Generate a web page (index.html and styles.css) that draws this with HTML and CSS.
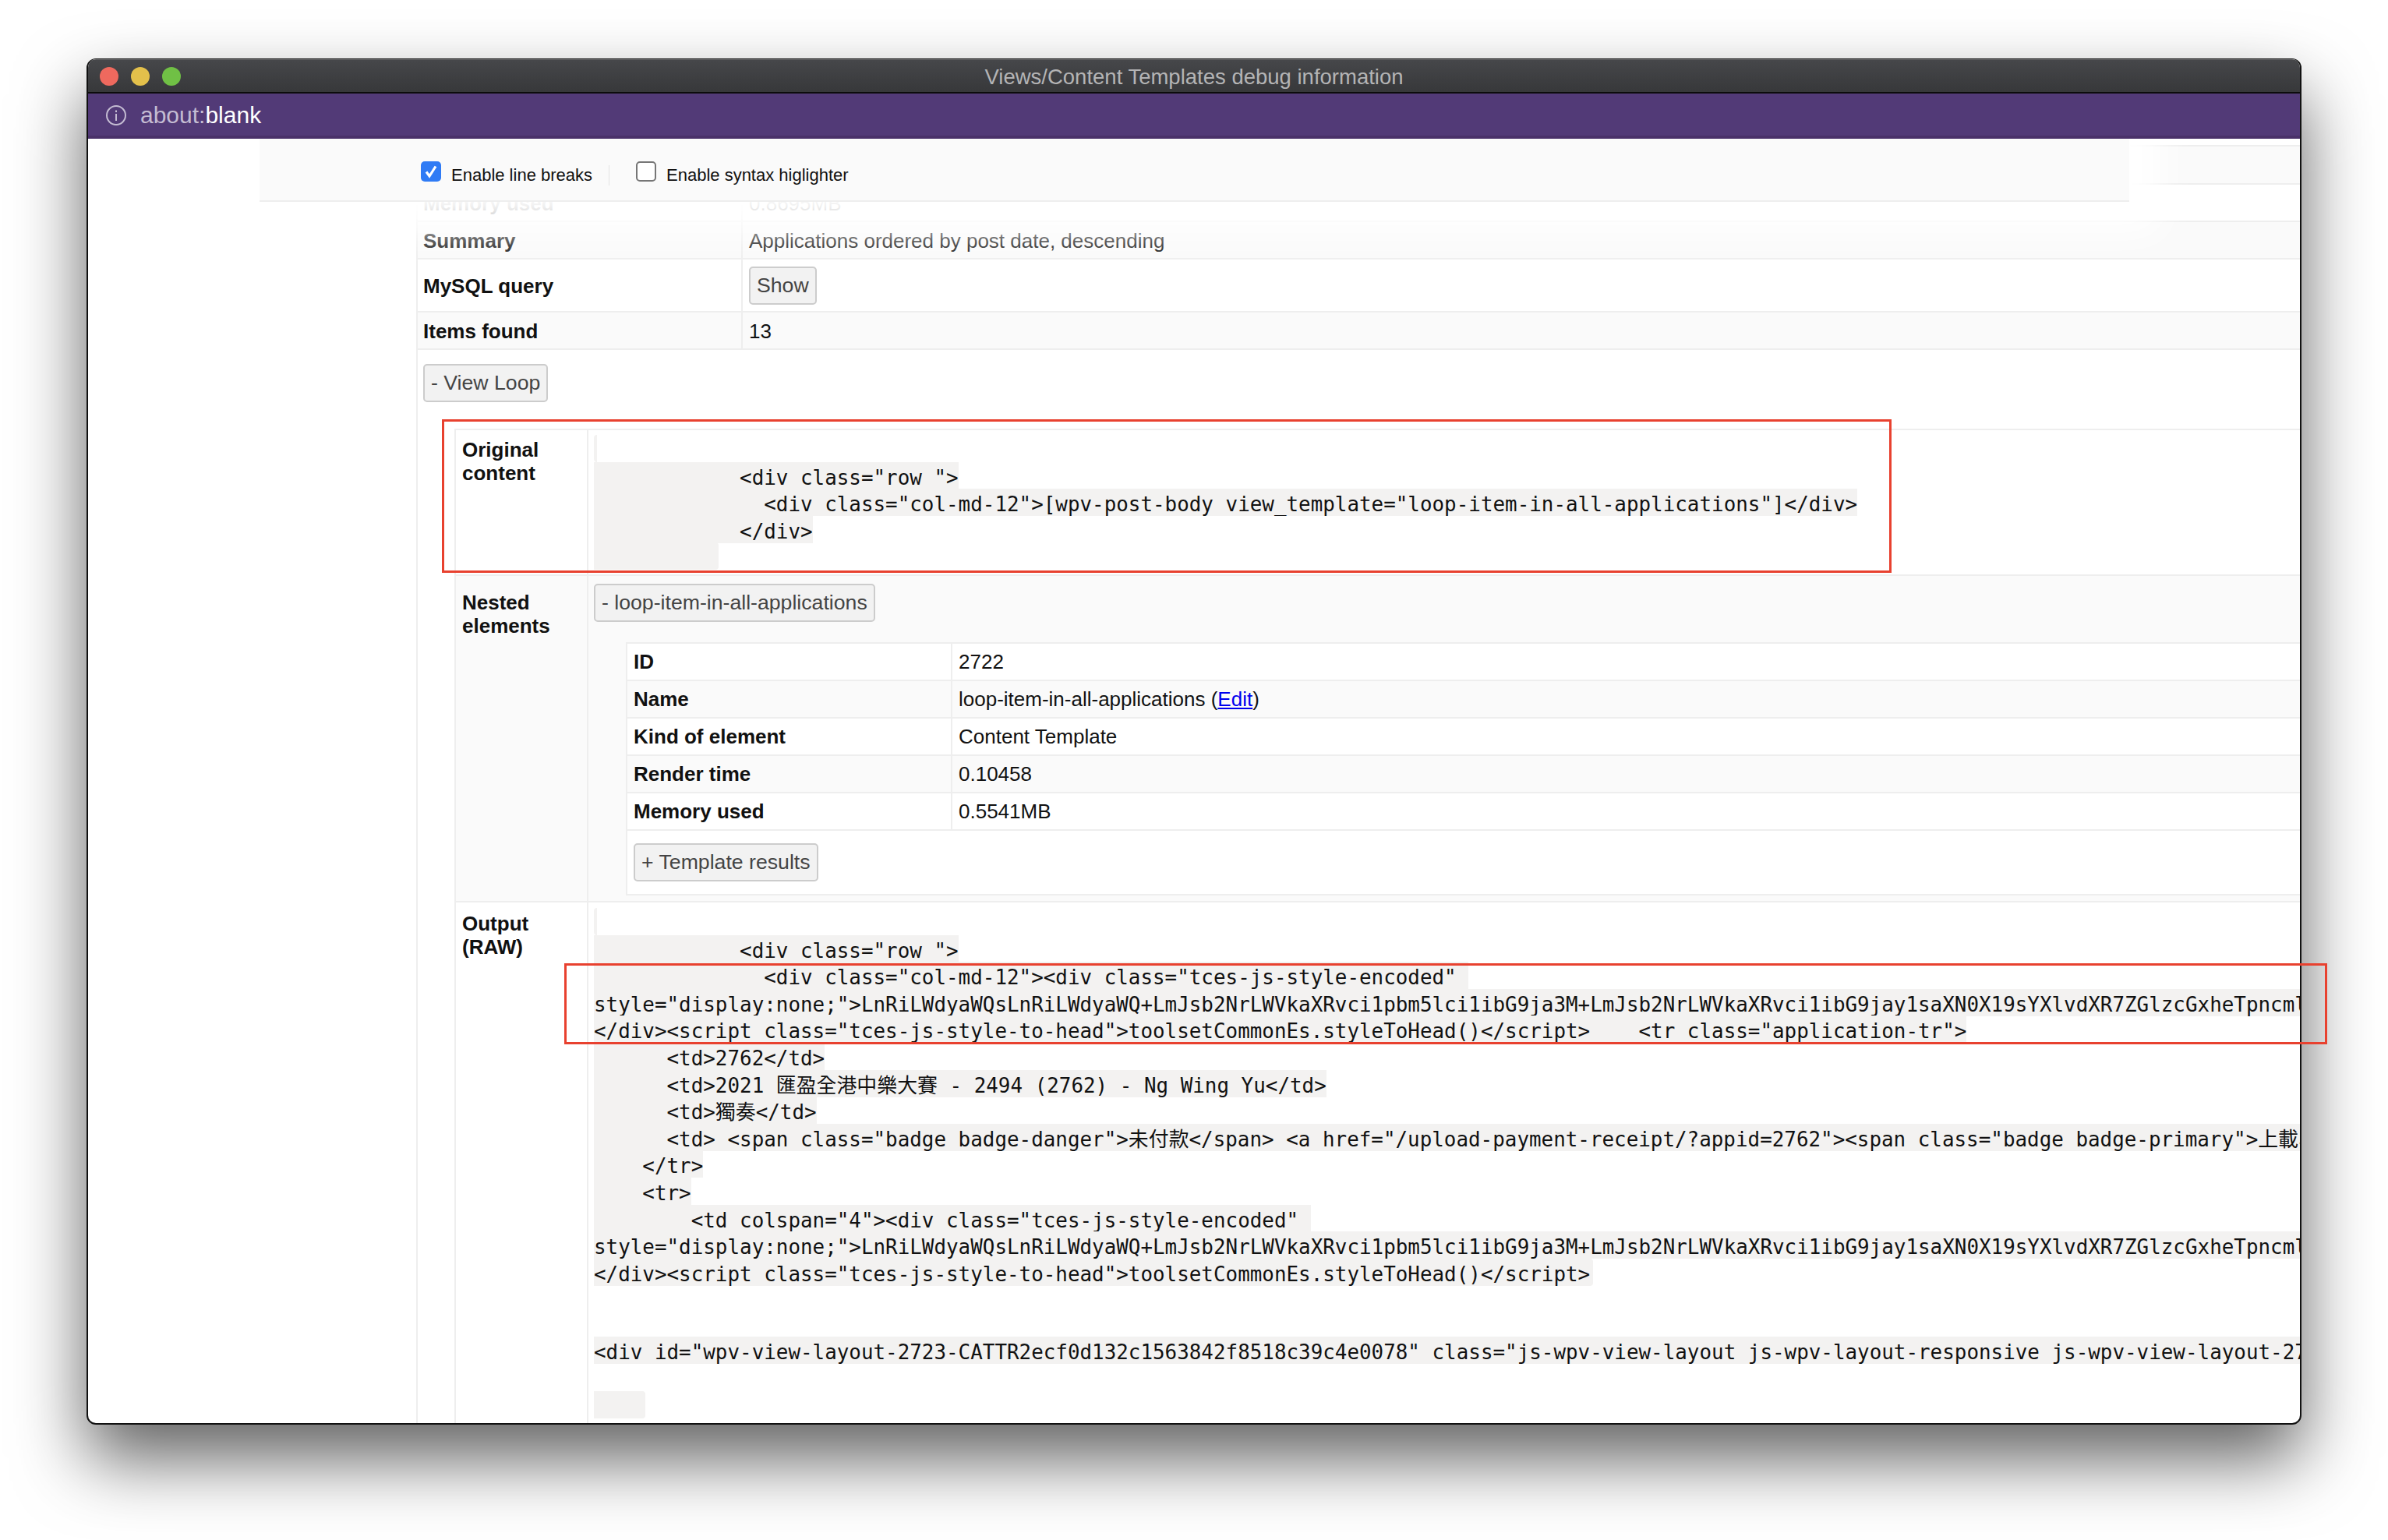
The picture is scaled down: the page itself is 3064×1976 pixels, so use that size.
FILE: index.html
```html
<!DOCTYPE html>
<html lang="en">
    <head>
        <meta charset="UTF-8" />
        <title>Views/Content Templates debug information</title>
        <link rel="stylesheet" href="styles.css">
    </head>
    <body>
        <!-- 창 -->
        <div class="window">
            <div class="titlebar">
                <div class="lights">
                    <span class="light red"></span>
                    <span class="light yellow"></span>
                    <span class="light green"></span>
                </div>
                <div class="title">Views/Content Templates debug information</div>
            </div>
            <div class="addressbar">
                <svg class="info" width="28" height="28" viewBox="0 0 28 28">
                    <circle cx="14" cy="14" r="12" fill="none" stroke="#c4bcd2" stroke-width="2" />
                    <rect x="13" y="12" width="2" height="9" fill="#c4bcd2" />
                    <rect x="13" y="7.5" width="2" height="2.5" fill="#c4bcd2" />
                </svg>
                <span class="url"><span class="scheme">about:</span>blank</span>
            </div>

            <div class="content">
                <!-- 상단 고정바 -->
                <div class="toolbar">
                    <label class="opt">
                        <span class="check on">
                            <svg width="26" height="26" viewBox="0 0 26 26">
                                <path d="M7 13.5 L11 19 L19 6.5" fill="none" stroke="#fff" stroke-width="3.2" />
                            </svg>
                        </span>
                        Enable line breaks
                    </label>
                    <span class="divider"></span>
                    <label class="opt">
                        <span class="check"></span>
                        Enable syntax higlighter
                    </label>
                </div>

                <div class="main">
                    <div class="row shade first"><div class="lbl"></div><div class="val"></div></div>
                    <div class="row"><div class="lbl">Memory used</div><div class="val">0.8695MB</div></div>
                    <div class="row shade"><div class="lbl">Summary</div><div class="val">Applications ordered by post date, descending</div></div>
                    <div class="row tall"><div class="lbl">MySQL query</div><div class="val"><button class="btn">Show</button></div></div>
                    <div class="row shade"><div class="lbl">Items found</div><div class="val">13</div></div>

                    <div class="loopbar"><button class="btn">- View Loop</button></div>

                    <!-- 내부 테이블 -->
                    <div class="nested">
                        <div class="nrow">
                            <div class="nlbl">Original content</div>
                            <div class="nval">
<pre class="code"><code>
            &lt;div class="row "&gt;
              &lt;div class="col-md-12"&gt;[wpv-post-body view_template="loop-item-in-all-applications"]&lt;/div&gt;
            &lt;/div&gt;
          </code></pre>
                            </div>
                        </div>
                        <div class="nrow shade">
                            <div class="nlbl">Nested elements</div>
                            <div class="nval">
                                <button class="btn">- loop-item-in-all-applications</button>
                                <div class="sub">
                                    <div class="row white"><div class="lbl">ID</div><div class="val">2722</div></div>
                                    <div class="row shade"><div class="lbl">Name</div><div class="val">loop-item-in-all-applications (<a href="#">Edit</a>)</div></div>
                                    <div class="row white"><div class="lbl">Kind of element</div><div class="val">Content Template</div></div>
                                    <div class="row shade"><div class="lbl">Render time</div><div class="val">0.10458</div></div>
                                    <div class="row white"><div class="lbl">Memory used</div><div class="val">0.5541MB</div></div>
                                    <div class="subfoot"><button class="btn">+ Template results</button></div>
                                </div>
                            </div>
                        </div>
                        <div class="nrow last">
                            <div class="nlbl">Output (RAW)</div>
                            <div class="nval">
<pre class="code"><code>
            &lt;div class="row "&gt;
              &lt;div class="col-md-12"&gt;&lt;div class="tces-js-style-encoded" 
style="display:none;"&gt;LnRiLWdyaWQsLnRiLWdyaWQ+LmJsb2NrLWVkaXRvci1pbm5lci1ibG9ja3M+LmJsb2NrLWVkaXRvci1ibG9jay1saXN0X19sYXlvdXR7ZGlzcGxheTpncmlkfQ==
&lt;/div&gt;&lt;script class="tces-js-style-to-head"&gt;toolsetCommonEs.styleToHead()&lt;/script&gt;    &lt;tr class="application-tr"&gt;
      &lt;td&gt;2762&lt;/td&gt;
      &lt;td&gt;2021 匯盈全港中樂大賽 - 2494 (2762) - Ng Wing Yu&lt;/td&gt;
      &lt;td&gt;獨奏&lt;/td&gt;
      &lt;td&gt; &lt;span class="badge badge-danger"&gt;未付款&lt;/span&gt; &lt;a href="/upload-payment-receipt/?appid=2762"&gt;&lt;span class="badge badge-primary"&gt;上載收據&lt;/span&gt;&lt;/a&gt;&lt;/td&gt;
    &lt;/tr&gt;
    &lt;tr&gt;
        &lt;td colspan="4"&gt;&lt;div class="tces-js-style-encoded" 
style="display:none;"&gt;LnRiLWdyaWQsLnRiLWdyaWQ+LmJsb2NrLWVkaXRvci1pbm5lci1ibG9ja3M+LmJsb2NrLWVkaXRvci1ibG9jay1saXN0X19sYXlvdXR7ZGlzcGxheTpncmlkfQ==
&lt;/div&gt;&lt;script class="tces-js-style-to-head"&gt;toolsetCommonEs.styleToHead()&lt;/script&gt;</code></pre>
<pre class="code tail"><code class="plain">

&lt;div id="wpv-view-layout-2723-CATTR2ecf0d132c1563842f8518c39c4e0078" class="js-wpv-view-layout js-wpv-layout-responsive js-wpv-view-layout-2723"&gt;

    </code></pre>
                            </div>
                        </div>
                    </div>
                </div>
            </div>
        </div>

        <!-- 빨간 표시 박스 -->
        <div class="mark mark1"></div>
        <div class="mark mark2"></div>
    </body>
</html>
```

FILE: styles.css
```css
/* 공통 */
:root {
    --line: #eee;
    --shade: #fafafa;
    --band: #f3f2f1;
}

html,
body {
    margin: 0;
    background-color: #fff;
}

body {
    position: relative;
    width: 3064px;
    height: 1976px;
    padding: 75px 0 0 111px;
    box-sizing: border-box;
    overflow: hidden;
    font-family: "Liberation Sans", sans-serif;
    font-size: 26px;
    line-height: 30px;
    color: #111;
}

/* 창 */
.window {
    display: flex;
    flex-direction: column;
    width: 2842px;
    height: 1753px;
    box-sizing: border-box;
    border: solid #111;
    border-width: 1px 2px 2px;
    border-radius: 12px;
    overflow: hidden;
    background-color: #fff;
    box-shadow: 0 44px 90px rgba(0, 0, 0, 0.62);
}

.titlebar {
    position: relative;
    flex: none;
    display: flex;
    align-items: center;
    justify-content: center;
    height: 44px;
    box-sizing: border-box;
    padding-top: 2px;
    border-top: 1px solid #6a6a6c;
    border-bottom: 2px solid #0c0c0c;
    background: linear-gradient(#46474a, #37383a);
}

.lights {
    position: absolute;
    left: 15px;
    top: 9px;
    display: flex;
    gap: 16px;
}

.light {
    width: 24px;
    height: 24px;
    border-radius: 50%;
}

.red { background-color: #ee695e; }
.yellow { background-color: #e3c04b; }
.green { background-color: #70c045; }

.title {
    font-size: 27.5px;
    color: #b4b4b5;
}

.addressbar {
    flex: none;
    display: flex;
    align-items: center;
    height: 58px;
    box-sizing: border-box;
    padding: 2px 0 0 22px;
    border-bottom: 4px solid #4a3169;
    background-color: #523a77;
}

.info {
    margin-right: 17px;
}

.url {
    font-size: 30px;
    color: #fff;
}

.scheme {
    color: #c4bcd2;
}

/* 본문 */
.content {
    position: relative;
    flex: 1;
    min-height: 0;
    overflow: hidden;
    padding-top: 8px;
}

.toolbar {
    position: absolute;
    z-index: 2;
    top: 0;
    left: 220px;
    display: flex;
    align-items: center;
    width: 2399px;
    height: 81px;
    box-sizing: border-box;
    padding: 14px 0 0 207px;
    border-bottom: 2px solid var(--line);
    background-color: var(--shade);
    box-shadow: 0 0 45px 40px #fff;
    font-size: 22px;
}

.opt {
    display: flex;
    align-items: center;
    gap: 13px;
}

.check {
    display: block;
    width: 26px;
    height: 26px;
    margin-top: -10px;
    box-sizing: border-box;
    border: 2px solid #767676;
    border-radius: 5px;
    background-color: #fff;
}

.check.on {
    border: 0;
    background-color: #2f7bf5;
}

.check svg {
    display: block;
}

.divider {
    width: 1px;
    height: 26px;
    margin: 0 34px 0 21px;
    background-color: #e4e4e4;
}

/* 테이블 행 */
.main {
    margin-left: 421px;
    border-left: 2px solid var(--line);
}

.row {
    display: grid;
    grid-template-columns: 417px 1fr;
    border-bottom: 2px solid var(--line);
}

.row.first {
    height: 51px;
    box-sizing: border-box;
    border-top: 2px solid var(--line);
}

.shade {
    background-color: var(--shade);
}

.white {
    background-color: #fff;
}

.lbl {
    padding: 9px 0 7px 7px;
    border-right: 2px solid var(--line);
    font-weight: bold;
}

.row.tall .lbl {
    padding-top: 19px;
}

.val {
    padding: 9px 0 7px 8px;
}

.row.tall .val {
    padding: 9px 0 8px 8px;
}

.val a {
    color: #00e;
}

/* 버튼 */
.btn {
    display: block;
    height: 49px;
    box-sizing: border-box;
    padding: 0 8px;
    border: 2px solid #ccc;
    border-radius: 5px;
    background-color: #f2f2f2;
    font-family: inherit;
    font-size: 26.67px;
    color: #444;
}

.loopbar {
    padding: 18px 0 34px 7px;
}

/* 내부 테이블 */
.nested {
    margin-left: 47px;
    border-left: 2px solid var(--line);
    border-top: 2px solid var(--line);
}

.nrow {
    display: grid;
    grid-template-columns: 170px 1fr;
    border-bottom: 2px solid var(--line);
}

.nrow.last {
    border-bottom: 0;
}

.nlbl {
    padding: 10px 30px 0 8px;
    border-right: 2px solid var(--line);
    font-weight: bold;
}

.nrow.shade .nlbl {
    padding-top: 19px;
}

.nrow.last .nlbl {
    padding-top: 12px;
}

.nval {
    min-width: 0;
    padding: 6px 0 3px 7px;
}

.nrow.shade .nval {
    padding: 10px 0 7px 7px;
}

.nrow.last .nval {
    padding: 7px 0 40px 7px;
}

/* 코드 */
.code {
    margin: 3px 0 0;
    font-family: "DejaVu Sans Mono", "Noto Sans CJK TC", monospace;
    font-size: 25.9px;
    line-height: 34.6px;
    color: #111;
}

.code code {
    padding: 5px 4px 0 4px;
    border-radius: 4px;
    background-color: var(--band);
    font-family: inherit;
}

.code code.plain {
    padding-left: 0;
}

.code.tail {
    margin-top: -3px;
}

/* 서브 테이블 */
.sub {
    margin: 26px 0 0 41px;
    border-left: 2px solid var(--line);
    border-top: 2px solid var(--line);
    border-bottom: 2px solid var(--line);
    background-color: #fff;
}

.sub .lbl {
    padding: 8px 0 8px 8px;
}

.sub .val {
    padding: 8px 0 8px 8px;
}

.subfoot {
    padding: 16px 0 16px 8px;
}

/* 빨간 표시 */
.mark {
    position: absolute;
    z-index: 3;
    box-sizing: border-box;
    border: 3px solid #e8412f;
}

.mark1 {
    left: 567px;
    top: 538px;
    width: 1860px;
    height: 197px;
}

.mark2 {
    left: 724px;
    top: 1236px;
    width: 2262px;
    height: 104px;
}
```
